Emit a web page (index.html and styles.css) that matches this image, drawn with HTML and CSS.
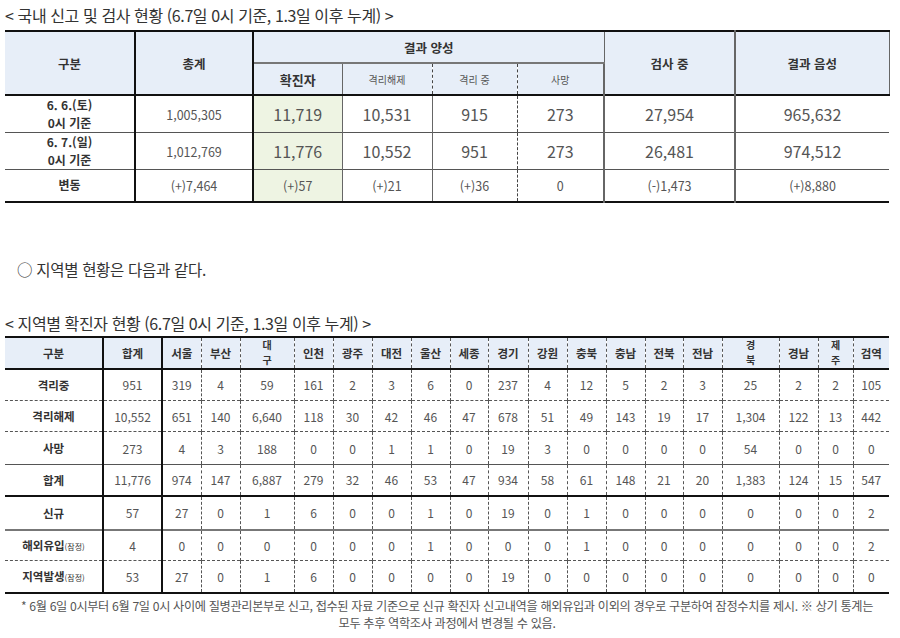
FILE: index.html
```html
<!DOCTYPE html>
<html lang="ko">
<head>
<meta charset="utf-8">
<link rel="stylesheet" href="styles.css">
</head>
<body>
<div class="page">
  <div class="title">&lt; 국내 신고 및 검사 현황 (6.7일 0시 기준, 1.3일 이후 누계) &gt;</div>
  <table class="t1">
    <colgroup>
      <col style="width:130px"><col style="width:118px"><col style="width:89px"><col style="width:90px">
      <col style="width:85px"><col style="width:87px"><col style="width:131px"><col style="width:154px">
    </colgroup>
    <tr class="h1">
      <th rowspan="2" class="thick-r">구분</th>
      <th rowspan="2" class="thick-r">총계</th>
      <th colspan="4" class="grp">결과 양성</th>
      <th rowspan="2" class="mid-r">검사 중</th>
      <th rowspan="2">결과 음성</th>
    </tr>
    <tr class="h2">
      <th class="strong">확진자</th>
      <th class="small dash-r">격리해제</th>
      <th class="small dash-r">격리 중</th>
      <th class="small mid-r">사망</th>
    </tr>
    <tr class="r">
      <th class="rowh thick-r">6. 6.(토)<br>0시 기준</th>
      <td class="thick-r sm">1,005,305</td>
      <td class="green big">11,719</td>
      <td class="big">10,531</td>
      <td class="big dash-r">915</td>
      <td class="big mid-r">273</td>
      <td class="big mid-r">27,954</td>
      <td class="big">965,632</td>
    </tr>
    <tr class="r">
      <th class="rowh thick-r">6. 7.(일)<br>0시 기준</th>
      <td class="thick-r sm">1,012,769</td>
      <td class="green big">11,776</td>
      <td class="big">10,552</td>
      <td class="big dash-r">951</td>
      <td class="big mid-r">273</td>
      <td class="big mid-r">26,481</td>
      <td class="big">974,512</td>
    </tr>
    <tr class="r last">
      <th class="rowh thick-r">변동</th>
      <td class="thick-r sm">(+)7,464</td>
      <td class="green sm">(+)57</td>
      <td class="sm">(+)21</td>
      <td class="sm dash-r">(+)36</td>
      <td class="sm mid-r">0</td>
      <td class="sm mid-r">(-)1,473</td>
      <td class="sm">(+)8,880</td>
    </tr>
  </table>

  <p class="note">○ 지역별 현황은 다음과 같다.</p>

  <div class="title title2">&lt; 지역별 확진자 현황 (6.7일 0시 기준, 1.3일 이후 누계) &gt;</div>
  <table class="t2">
    <colgroup>
      <col style="width:98px"><col style="width:59px"><col style="width:39px"><col style="width:39px">
      <col style="width:54px"><col style="width:39px"><col style="width:39px"><col style="width:39px">
      <col style="width:39px"><col style="width:38px"><col style="width:40px"><col style="width:39px">
      <col style="width:39px"><col style="width:39px"><col style="width:38px"><col style="width:39px">
      <col style="width:57px"><col style="width:39px"><col style="width:35px"><col style="width:36px">
    </colgroup>
    <tr class="hd">
      <th class="thick-r">구분</th><th class="thick-r">합계</th><th>서울</th><th>부산</th>
      <th><span class="stack">대<br>구</span></th><th>인천</th><th>광주</th><th>대전</th><th>울산</th>
      <th>세종</th><th>경기</th><th>강원</th><th>충북</th><th>충남</th><th>전북</th><th>전남</th>
      <th><span class="stack">경<br>북</span></th><th>경남</th><th><span class="stack">제<br>주</span></th><th>검역</th>
    </tr>
    <tr class="b dash-b" style="height:32px">
      <th class="thick-r">격리중</th><td class="thick-r">951</td><td>319</td><td>4</td><td>59</td><td>161</td><td>2</td><td>3</td><td>6</td><td>0</td><td>237</td><td>4</td><td>12</td><td>5</td><td>2</td><td>3</td><td>25</td><td>2</td><td>2</td><td>105</td>
    </tr>
    <tr class="b dash-b" style="height:31px">
      <th class="thick-r">격리해제</th><td class="thick-r">10,552</td><td>651</td><td>140</td><td>6,640</td><td>118</td><td>30</td><td>42</td><td>46</td><td>47</td><td>678</td><td>51</td><td>49</td><td>143</td><td>19</td><td>17</td><td>1,304</td><td>122</td><td>13</td><td>442</td>
    </tr>
    <tr class="b solid-b" style="height:33px">
      <th class="thick-r">사망</th><td class="thick-r">273</td><td>4</td><td>3</td><td>188</td><td>0</td><td>0</td><td>1</td><td>1</td><td>0</td><td>19</td><td>3</td><td>0</td><td>0</td><td>0</td><td>0</td><td>54</td><td>0</td><td>0</td><td>0</td>
    </tr>
    <tr class="b thick-b" style="height:31px">
      <th class="thick-r">합계</th><td class="thick-r">11,776</td><td>974</td><td>147</td><td>6,887</td><td>279</td><td>32</td><td>46</td><td>53</td><td>47</td><td>934</td><td>58</td><td>61</td><td>148</td><td>21</td><td>20</td><td>1,383</td><td>124</td><td>15</td><td>547</td>
    </tr>
    <tr class="b gray-b" style="height:34px">
      <th class="thick-r">신규</th><td class="thick-r">57</td><td>27</td><td>0</td><td>1</td><td>6</td><td>0</td><td>0</td><td>1</td><td>0</td><td>19</td><td>0</td><td>1</td><td>0</td><td>0</td><td>0</td><td>0</td><td>0</td><td>0</td><td>2</td>
    </tr>
    <tr class="b dash-b" style="height:31px">
      <th class="thick-r">해외유입<span class="tiny">(잠정)</span></th><td class="thick-r">4</td><td>0</td><td>0</td><td>0</td><td>0</td><td>0</td><td>0</td><td>1</td><td>0</td><td>0</td><td>0</td><td>1</td><td>0</td><td>0</td><td>0</td><td>0</td><td>0</td><td>0</td><td>2</td>
    </tr>
    <tr class="b last" style="height:32px">
      <th class="thick-r">지역발생<span class="tiny">(잠정)</span></th><td class="thick-r">53</td><td>27</td><td>0</td><td>1</td><td>6</td><td>0</td><td>0</td><td>0</td><td>0</td><td>19</td><td>0</td><td>0</td><td>0</td><td>0</td><td>0</td><td>0</td><td>0</td><td>0</td><td>0</td>
    </tr>
  </table>
  <p class="foot">* 6월 6일 0시부터 6월 7일 0시 사이에 질병관리본부로 신고, 접수된 자료 기준으로 신규 확진자 신고내역을 해외유입과 이외의 경우로 구분하여 잠정수치를 제시. ※ 상기 통계는<br>모두 추후 역학조사 과정에서 변경될 수 있음.</p>
</div>
</body>
</html>
```

FILE: styles.css
```css
* { box-sizing: border-box; }
html, body { margin: 0; padding: 0; background: #fff; }
body {
  font-family: "Noto Sans CJK KR", "Noto Sans", sans-serif;
  color: #444;
}
.page { padding: 0 11px 0 5px; }

.title {
  font-size: 16px;
  color: #333;
  height: 30px;
  line-height: 30px;
  letter-spacing: -0.4px;
  white-space: nowrap;
}

table {
  border-collapse: collapse;
  table-layout: fixed;
  width: 884px;
}
th, td {
  padding: 0;
  text-align: center;
  vertical-align: middle;
  overflow: hidden;
  white-space: nowrap;
}

/* table 1 */
.t1 { border-top: 2px solid #111; border-bottom: 2px solid #111; }
.t1 th { background: #e7eef8; font-weight: 700; color: #333; font-size: 12.5px; }
.t1 .h1 { height: 32px; }
.t1 .h2 { height: 32px; border-bottom: 2px solid #111; }
.t1 .h1 th, .t1 .h2 th { border-right: 1px solid #666; }
.t1 .grp { border-bottom: 2px solid #777; }
.t1 .thick-r { border-right: 2px solid #111 !important; }
.t1 .mid-r { border-right: 2px solid #666 !important; }
.t1 .dash-r { border-right: 1px dashed #444 !important; }
.t1 .small { font-size: 10px; font-weight: 400; color: #555; }
.t1 .strong { font-size: 13px; }
.t1 .r { height: 37px; border-bottom: 1px solid #555; }
.t1 .r.last { height: 32px; border-bottom: 2px solid #111; }
.t1 .r td { border-right: 1px solid #666; color: #555; }
.t1 .r td:last-child { border-right: none; }
.t1 .rowh { background: #fff; font-size: 12px; line-height: 18px; color: #333; }
.t1 .sm { font-size: 12.5px; }
.t1 .big { font-size: 16px; }
.t1 .green { background: #eef4e3; }

.note {
  margin: 55px 0 0 12px;
  font-size: 15.5px;
  color: #333;
  height: 22px;
  line-height: 22px;
  letter-spacing: -0.3px;
}
.title2 { margin-top: 31px; height: 25px; line-height: 25px; }

/* table 2 */
.t2 { border-top: 2px solid #111; border-bottom: 2px solid #111; }
.t2 th { font-size: 11.5px; font-weight: 700; color: #333; }
.t2 .hd { height: 32px; border-bottom: 2px solid #111; }
.t2 .hd th { background: #e7eef8; border-right: 1px dashed #555; }
.t2 .stack { display: inline-block; font-size: 10px; line-height: 14.5px; vertical-align: middle; }
.t2 td, .t2 .b th { border-right: 1px dashed #555; font-size: 12px; color: #555; }
.t2 .b th { color: #333; font-size: 11.5px; }
.t2 th:last-child, .t2 td:last-child { border-right: none; }
.t2 .thick-r { border-right: 2px solid #111 !important; }
.t2 .dash-b { border-bottom: 1px dashed #555; }
.t2 .solid-b { border-bottom: 1px solid #555; }
.t2 .thick-b { border-bottom: 2px solid #111; }
.t2 .gray-b { border-bottom: 2px solid #777; }
.t2 .tiny { font-size: 8px; font-weight: 400; }

.foot {
  margin: 4px 0 0 0;
  font-size: 12.2px;
  line-height: 17px;
  color: #555;
  text-align: center;
  letter-spacing: -0.35px;
  white-space: nowrap;
}
```
